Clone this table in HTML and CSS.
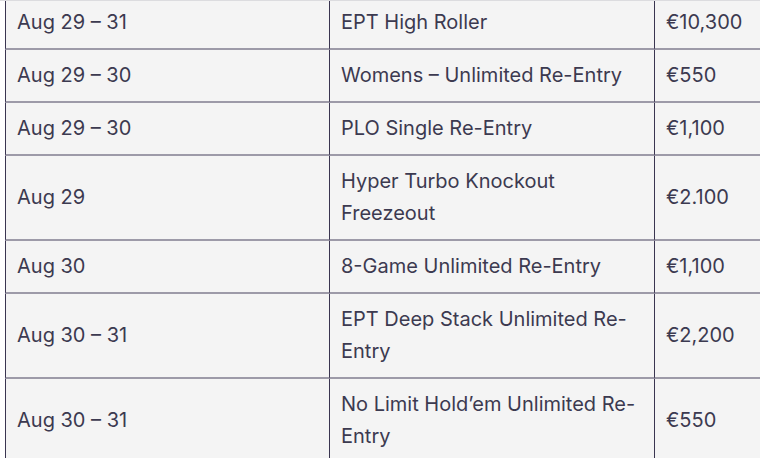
FILE: index.html
```html
<!DOCTYPE html>
<html>
<head>
<meta charset="utf-8">
<link rel="stylesheet" href="styles.css">
</head>
<body>
<div class="frame">
  <table class="schedule">
    <colgroup>
      <col class="c-date">
      <col class="c-event">
      <col class="c-buyin">
    </colgroup>
    <tbody>
      <tr><td>Aug 29 – 31</td><td>EPT High Roller</td><td>€10,300</td></tr>
      <tr><td>Aug 29 – 30</td><td>Womens – Unlimited Re-Entry</td><td>€550</td></tr>
      <tr><td>Aug 29 – 30</td><td>PLO Single Re-Entry</td><td>€1,100</td></tr>
      <tr><td>Aug 29</td><td>Hyper Turbo Knockout Freezeout</td><td>€2.100</td></tr>
      <tr><td>Aug 30</td><td>8-Game Unlimited Re-Entry</td><td>€1,100</td></tr>
      <tr><td>Aug 30 – 31</td><td>EPT Deep Stack Unlimited Re-Entry</td><td>€2,200</td></tr>
      <tr><td>Aug 30 – 31</td><td>No Limit Hold’em Unlimited Re-Entry</td><td>€550</td></tr>
    </tbody>
  </table>
</div>
</body>
</html>
```
FILE: styles.css
```css
html, body {
  margin: 0;
  padding: 0;
  background: #ffffff;
}
.frame {
  height: 457px;
  overflow: hidden;
  border-top: 1px solid #dcdcdf;
  padding-left: 5px;
  background: #ffffff;
}
.schedule {
  margin-top: -4px;
  width: 974px;
  table-layout: fixed;
  border-collapse: separate;
  border-spacing: 0;
  background: #f4f4f4;
  font-family: Inter, "Noto Sans", sans-serif;
  font-size: 20px;
  line-height: 32px;
  color: #3c3a50;
}
.c-date { width: 324px; }
.c-event { width: 325px; }
.c-buyin { width: 325px; }
.schedule td {
  padding: 9px 11px 10px 11px;
  vertical-align: middle;
  border-left: 1px solid #3a3550;
  border-bottom: 2px solid #9d9aa8;
}
```
